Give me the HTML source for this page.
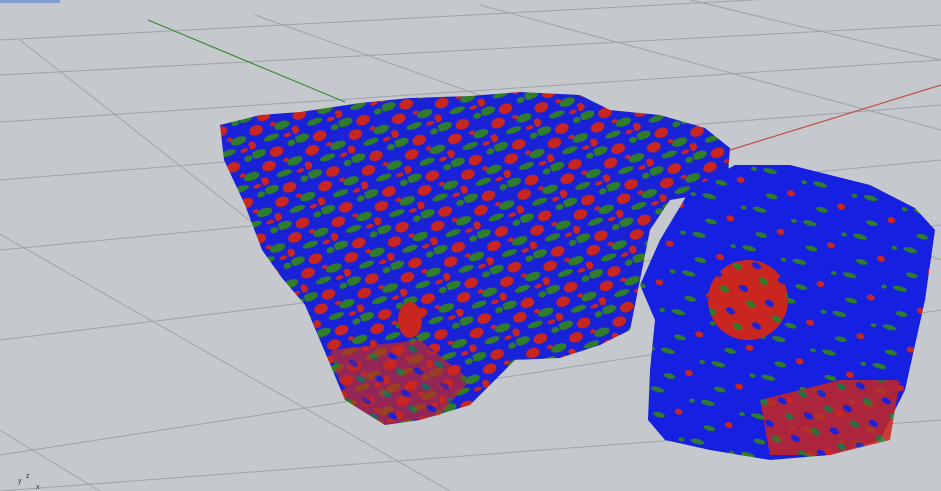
<!DOCTYPE html>
<html><head><meta charset="utf-8"><style>
html,body{margin:0;padding:0;width:941px;height:491px;overflow:hidden;background:#c5c9cd;font-family:"Liberation Sans",sans-serif}
</style></head><body>
<svg width="941" height="491" viewBox="0 0 941 491" xmlns="http://www.w3.org/2000/svg">
<defs>
<pattern id="mix" width="46" height="38" patternUnits="userSpaceOnUse" patternTransform="rotate(-20)">
<rect width="46" height="38" fill="#1a22d8"/>
<ellipse cx="6" cy="5" rx="8" ry="4" fill="#2f7d2a"/>
<ellipse cx="24" cy="9" rx="7" ry="5" fill="#c8261f"/>
<ellipse cx="38" cy="24" rx="8" ry="4" fill="#2f7d2a"/>
<ellipse cx="12" cy="20" rx="7" ry="5" fill="#c8261f"/>
<ellipse cx="24" cy="32" rx="8" ry="3" fill="#2f7d2a"/>
<ellipse cx="3" cy="33" rx="4" ry="4" fill="#c8261f"/>
<ellipse cx="41" cy="6" rx="4" ry="3" fill="#2f7d2a"/>
<ellipse cx="30" cy="20" rx="3" ry="2" fill="#c8261f"/>
<ellipse cx="40" cy="35" rx="4" ry="2" fill="#c8261f"/>
</pattern>
<pattern id="blue" width="52" height="40" patternUnits="userSpaceOnUse" patternTransform="rotate(15)">
<rect width="52" height="40" fill="#1520e0"/>
<ellipse cx="8" cy="6" rx="7" ry="2.5" fill="#2f7d2a"/>
<ellipse cx="34" cy="22" rx="4" ry="3" fill="#c8261f"/>
<ellipse cx="16" cy="30" rx="6" ry="2.5" fill="#2f7d2a"/>
<ellipse cx="44" cy="8" rx="3" ry="2" fill="#2f7d2a"/>
</pattern>
<pattern id="redmix" width="30" height="26" patternUnits="userSpaceOnUse" patternTransform="rotate(30)">
<rect width="30" height="26" fill="#c8261f"/>
<ellipse cx="8" cy="8" rx="5" ry="3" fill="#1a22d8"/>
<ellipse cx="22" cy="18" rx="5" ry="3" fill="#2f7d2a"/>
</pattern>
</defs>
<g stroke="#9ea3a8" stroke-width="1" fill="none">
<line x1="0" y1="40" x2="941" y2="-10"/>
<line x1="0" y1="75" x2="941" y2="25"/>
<line x1="0" y1="122" x2="941" y2="60"/>
<line x1="0" y1="180" x2="941" y2="105"/>
<line x1="0" y1="250" x2="941" y2="160"/>
<line x1="0" y1="340" x2="941" y2="225"/>
<line x1="0" y1="455" x2="941" y2="310"/>
<line x1="0" y1="491" x2="941" y2="420"/>
<line x1="20" y1="40" x2="300" y2="260"/>
<line x1="-60" y1="200" x2="450" y2="491"/>
<line x1="255" y1="15" x2="941" y2="260"/>
<line x1="480" y1="5" x2="941" y2="130"/>
<line x1="690" y1="0" x2="941" y2="60"/>
<line x1="-50" y1="400" x2="100" y2="491"/>
</g>
<line x1="148" y1="20" x2="345" y2="102" stroke="#3f8a3a" stroke-width="1.2"/>
<line x1="730" y1="150" x2="941" y2="85" stroke="#c0504a" stroke-width="1.2"/>
<polygon fill="url(#mix)" points="220,125 260,115 300,112 360,103 410,98 470,96 520,92 580,95 610,110 660,115 705,128 730,148 728,175 700,195 670,200 650,230 640,280 630,330 600,345 560,358 515,360 495,380 470,405 420,420 385,425 345,400 322,345 305,305 282,278 262,250 245,205 224,160"/>
<polygon fill="url(#blue)" points="690,190 735,165 790,165 870,185 915,208 935,230 925,300 905,390 880,440 830,455 770,460 710,450 665,440 648,420 650,370 655,320 640,285 660,240"/>
<ellipse cx="748" cy="300" rx="40" ry="40" fill="url(#redmix)"/>
<polygon fill="url(#redmix)" opacity="0.85" points="760,400 840,380 900,380 890,440 830,455 770,455"/>
<polygon fill="url(#redmix)" opacity="0.7" points="330,350 420,340 470,380 440,415 385,425 345,400"/>
<ellipse cx="410" cy="320" rx="12" ry="18" fill="#c8261f"/>
<g font-size="7" fill="#333"><text x="18" y="483">y</text><text x="26" y="478">z</text><text x="36" y="489">x</text></g>
<rect x="0" y="0" width="60" height="3" fill="#7f9fd0"/>
</svg>
</body></html>
